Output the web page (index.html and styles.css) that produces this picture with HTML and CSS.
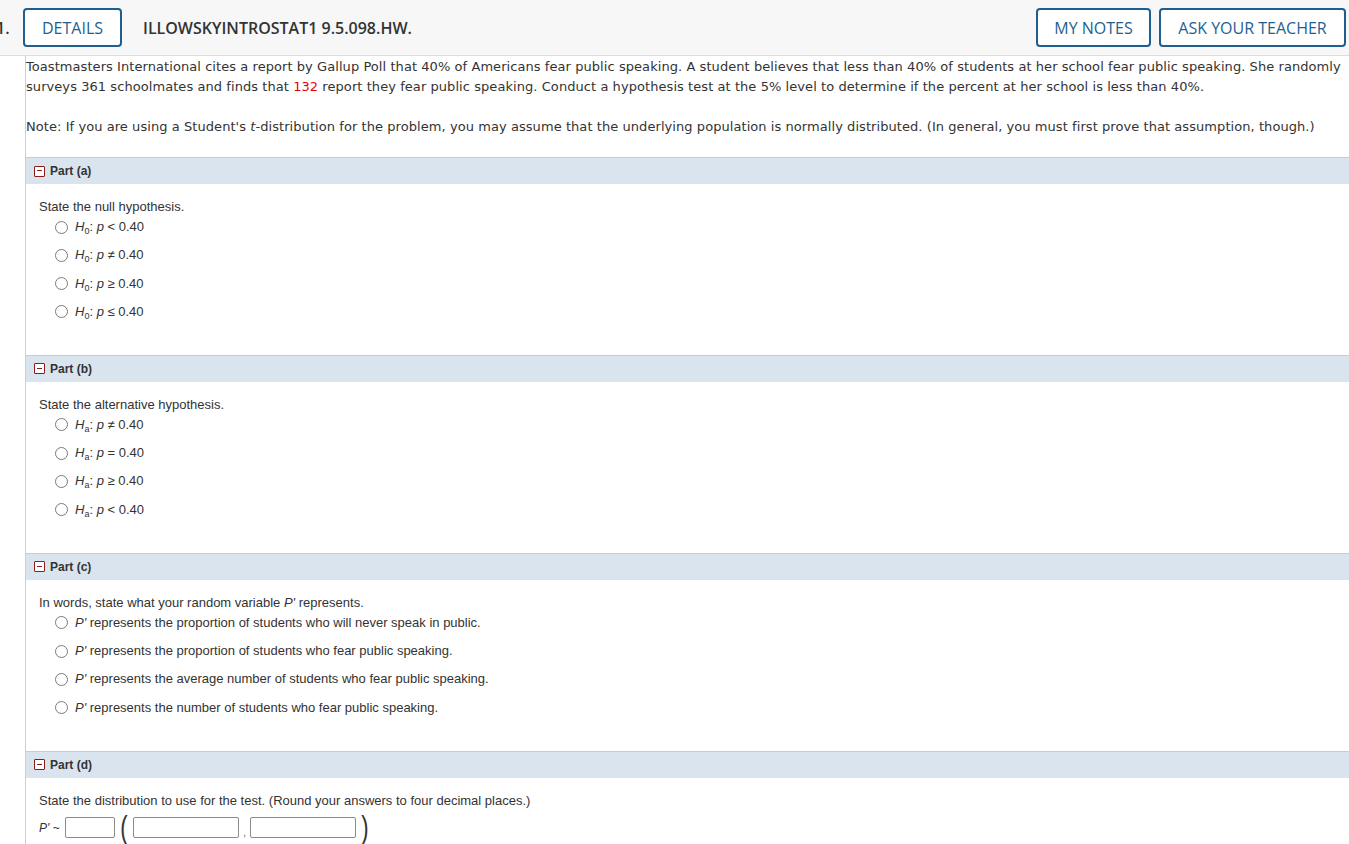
FILE: index.html
```html
<!DOCTYPE html>
<html lang="en">
<head>
<meta charset="utf-8">
<title>ILLOWSKYINTROSTAT1 9.5.098.HW.</title>
<link rel="stylesheet" href="styles.css">
</head>
<body>
<header class="qhead">
  <span class="qnum">1.</span>
  <button class="btn btn-details">DETAILS</button>
  <span class="qtitle">ILLOWSKYINTROSTAT1 9.5.098.HW.</span>
  <span class="spacer"></span>
  <button class="btn btn-notes">MY NOTES</button>
  <button class="btn btn-ask">ASK YOUR TEACHER</button>
</header>
<main class="qbody">
  <div class="problem">
    <p>Toastmasters International cites a report by Gallup Poll that 40% of Americans fear public speaking. A student believes that less than 40% of students at her school fear public speaking. She randomly surveys 361 schoolmates and finds that <span class="red">132</span> report they fear public speaking. Conduct a hypothesis test at the 5% level to determine if the percent at her school is less than 40%.</p>
    <p>Note: If you are using a Student's <i>t</i>-distribution for the problem, you may assume that the underlying population is normally distributed. (In general, you must first prove that assumption, though.)</p>
  </div>

  <section class="part">
    <div class="part-head"><span class="toggle"></span>Part (a)</div>
    <div class="part-body">
      <div class="prompt">State the null hypothesis.</div>
      <ul class="choices">
        <li><span class="radio"></span><span><i>H</i><sub>0</sub>: <i>p</i> &lt; 0.40</span></li>
        <li><span class="radio"></span><span><i>H</i><sub>0</sub>: <i>p</i> ≠ 0.40</span></li>
        <li><span class="radio"></span><span><i>H</i><sub>0</sub>: <i>p</i> ≥ 0.40</span></li>
        <li><span class="radio"></span><span><i>H</i><sub>0</sub>: <i>p</i> ≤ 0.40</span></li>
      </ul>
    </div>
  </section>

  <section class="part">
    <div class="part-head"><span class="toggle"></span>Part (b)</div>
    <div class="part-body">
      <div class="prompt">State the alternative hypothesis.</div>
      <ul class="choices">
        <li><span class="radio"></span><span><i>H</i><sub>a</sub>: <i>p</i> ≠ 0.40</span></li>
        <li><span class="radio"></span><span><i>H</i><sub>a</sub>: <i>p</i> = 0.40</span></li>
        <li><span class="radio"></span><span><i>H</i><sub>a</sub>: <i>p</i> ≥ 0.40</span></li>
        <li><span class="radio"></span><span><i>H</i><sub>a</sub>: <i>p</i> &lt; 0.40</span></li>
      </ul>
    </div>
  </section>

  <section class="part">
    <div class="part-head"><span class="toggle"></span>Part (c)</div>
    <div class="part-body">
      <div class="prompt">In words, state what your random variable <i>P'</i> represents.</div>
      <ul class="choices">
        <li><span class="radio"></span><span><i>P'</i> represents the proportion of students who will never speak in public.</span></li>
        <li><span class="radio"></span><span><i>P'</i> represents the proportion of students who fear public speaking.</span></li>
        <li><span class="radio"></span><span><i>P'</i> represents the average number of students who fear public speaking.</span></li>
        <li><span class="radio"></span><span><i>P'</i> represents the number of students who fear public speaking.</span></li>
      </ul>
    </div>
  </section>

  <section class="part">
    <div class="part-head"><span class="toggle"></span>Part (d)</div>
    <div class="part-body">
      <div class="prompt">State the distribution to use for the test. (Round your answers to four decimal places.)</div>
      <div class="dist-row">
        <span class="dist-label"><i>P'</i> ~</span>
        <span class="box box-s"></span>
        <span class="paren">(</span>
        <span class="box box-l"></span>
        <span class="comma">,</span>
        <span class="box box-l"></span>
        <span class="paren">)</span>
      </div>
    </div>
  </section>
</main>
</body>
</html>
```

FILE: styles.css
```css
html, body {
  margin: 0;
  padding: 0;
  background: #ffffff;
  overflow: hidden;
}

body {
  width: 1349px;
  height: 844px;
  font-family: "Liberation Sans", Arial, sans-serif;
  color: #333;
}

.qhead {
  display: flex;
  align-items: center;
  height: 55px;
  background: #f7f7f7;
  border-bottom: 1px solid #dedede;
  font-family: "Open Sans", "Liberation Sans", sans-serif;
  font-size: 16px;
  overflow: hidden;
}

.qnum {
  margin-left: -4px;
  width: 27px;
  font-weight: 600;
  color: #333;
  flex: none;
}

.btn {
  flex: none;
  box-sizing: border-box;
  height: 39px;
  border: 2px solid #1f5f8f;
  border-radius: 4px;
  background: #fff;
  color: #1f5f8f;
  font-family: "Open Sans", "Liberation Sans", sans-serif;
  font-size: 16px;
  font-weight: 500;
  padding: 0;
  cursor: pointer;
}

.btn-details { width: 99px; }
.btn-notes { width: 115px; }
.btn-ask { width: 187px; margin-left: 8px; margin-right: 3px; }

.qtitle {
  margin-left: 21px;
  font-weight: 600;
  color: #333;
}

.spacer { flex: 1; }

.qbody {
  margin-left: 25px;
  border-left: 1px solid #cfcfcf;
  min-height: 800px;
}

.problem {
  padding-top: 1px;
  font-family: "DejaVu Sans", Verdana, sans-serif;
  font-size: 13px;
  letter-spacing: 0.065px;
  line-height: 20px;
  color: #333;
}

.problem p {
  margin: 0 0 20px 0;
}

.red { color: #e8000b; }

.part-head {
  display: flex;
  align-items: center;
  height: 26px;
  border-top: 1px solid #cbcbcb;
  background: #d9e4ee;
  padding-left: 8px;
  font-size: 12px;
  font-weight: bold;
  color: #333;
}

.toggle {
  position: relative;
  box-sizing: border-box;
  width: 11px;
  height: 11px;
  border: 1.5px solid #8a1c1c;
  border-radius: 1px;
  margin-right: 5px;
  background: #fff;
}

.toggle::after {
  content: "";
  position: absolute;
  left: 2px;
  right: 2px;
  top: 3.5px;
  height: 1.2px;
  background: #8a1c1c;
}

.part-body {
  padding: 15px 0 35px 13px;
  font-size: 13px;
  color: #333;
}

.prompt {
  height: 16px;
  line-height: 16px;
}

.choices {
  list-style: none;
  margin: 4px 0 0 0;
  padding: 0 0 0 16px;
  display: flex;
  flex-direction: column;
  gap: 12.3px;
}

.choices li {
  display: flex;
  align-items: center;
  height: 16px;
  line-height: 16px;
}

.radio {
  box-sizing: border-box;
  width: 13px;
  height: 13px;
  border: 1px solid #7a7a7a;
  border-radius: 50%;
  background: #fff;
  margin-right: 7px;
  flex: none;
}

sub {
  font-size: 9px;
  vertical-align: -3px;
  line-height: 0;
}

.dist-row {
  display: flex;
  align-items: center;
  height: 32px;
  margin-top: 3px;
}

.dist-label {
  font-size: 12px;
  width: 26px;
  flex: none;
}

.box {
  box-sizing: border-box;
  height: 21px;
  border: 1px solid #8a8a8a;
  border-radius: 2px;
  background: #fff;
  flex: none;
}

.box-s { width: 50px; }
.box-l { width: 106px; }

.paren {
  display: inline-block;
  font-size: 22px;
  font-weight: normal;
  line-height: 22px;
  color: #333;
  width: 18px;
  text-align: center;
  flex: none;
  transform: scaleY(1.45);
}

.comma {
  font-size: 11px;
  color: #777;
  width: 11px;
  text-align: center;
  align-self: flex-end;
  margin-bottom: 6px;
}
```
